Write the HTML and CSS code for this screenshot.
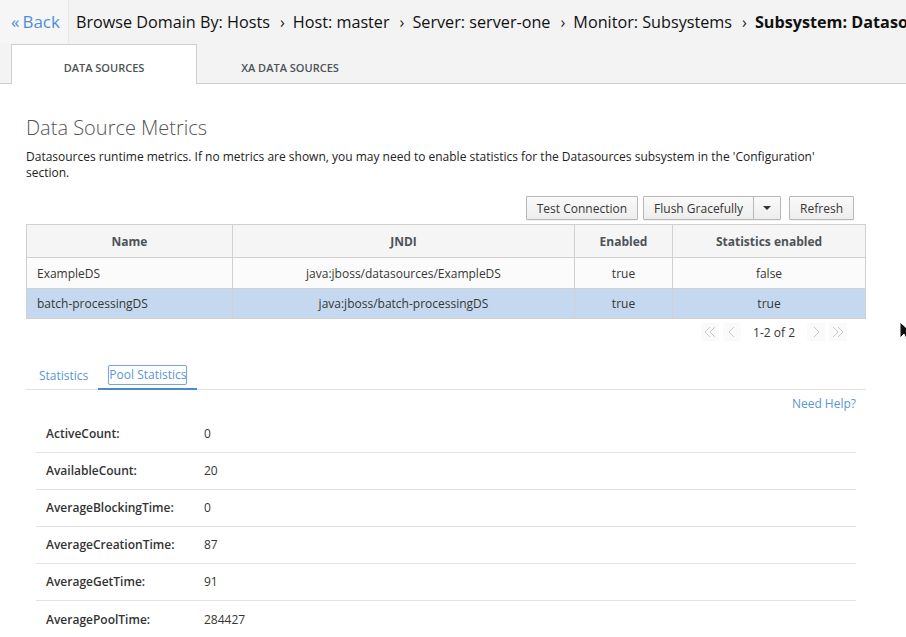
FILE: index.html
```html
<!DOCTYPE html>
<html>
<head>
<meta charset="utf-8">
<link rel="stylesheet" href="styles.css">
</head>
<body>
<div class="header">
  <div class="crumbs">
    <a class="back"><span class="laquo">«</span> Back</a>
    <div class="path"><span>Browse Domain By: Hosts</span><span class="sep">›</span><span>Host: master</span><span class="sep">›</span><span>Server: server-one</span><span class="sep">›</span><span>Monitor: Subsystems</span><span class="sep">›</span><b>Subsystem: Datasources</b></div>
  </div>
  <div class="tabs">
    <div class="tab active">DATA SOURCES</div>
    <div class="tab">XA DATA SOURCES</div>
  </div>
</div>

<div class="content">
  <h2 class="title">Data Source Metrics</h2>
  <p class="desc">Datasources runtime metrics. If no metrics are shown, you may need to enable statistics for the Datasources subsystem in the 'Configuration' section.</p>

  <div class="toolbar">
    <button class="btn">Test Connection</button>
    <div class="split">
      <button class="btn btn-main">Flush Gracefully</button>
      <button class="btn btn-caret"><span class="caret"></span></button>
    </div>
    <button class="btn">Refresh</button>
  </div>

  <table class="grid">
    <thead>
      <tr><th class="c-name">Name</th><th class="c-jndi">JNDI</th><th class="c-en">Enabled</th><th class="c-st">Statistics enabled</th></tr>
    </thead>
    <tbody>
      <tr><td class="left">ExampleDS</td><td>java:jboss/datasources/ExampleDS</td><td>true</td><td>false</td></tr>
      <tr class="selected"><td class="left">batch-processingDS</td><td>java:jboss/batch-processingDS</td><td>true</td><td>true</td></tr>
    </tbody>
  </table>

  <div class="pager">
    <span class="pg"><svg width="16" height="14" viewBox="0 0 16 14"><path d="M8 2 L3 7 L8 12 M13 2 L8 7 L13 12" fill="none" stroke="#c8c8c8" stroke-width="1"/></svg></span>
    <span class="pg"><svg width="16" height="14" viewBox="0 0 16 14"><path d="M10 2 L5 7 L10 12" fill="none" stroke="#c8c8c8" stroke-width="1"/></svg></span>
    <span class="pg-text">1-2 of 2</span>
    <span class="pg"><svg width="16" height="14" viewBox="0 0 16 14"><path d="M6 2 L11 7 L6 12" fill="none" stroke="#c8c8c8" stroke-width="1"/></svg></span>
    <span class="pg"><svg width="16" height="14" viewBox="0 0 16 14"><path d="M3 2 L8 7 L3 12 M8 2 L13 7 L8 12" fill="none" stroke="#c8c8c8" stroke-width="1"/></svg></span>
  </div>

  <div class="subtabs">
    <div class="subtab">Statistics</div>
    <div class="subtab active"><span class="focus">Pool Statistics</span></div>
  </div>

  <div class="help-row"><a class="help">Need Help?</a></div>

  <div class="metrics">
    <div class="mrow"><span class="mlabel">ActiveCount:</span><span class="mval">0</span></div>
    <div class="mrow"><span class="mlabel">AvailableCount:</span><span class="mval">20</span></div>
    <div class="mrow"><span class="mlabel">AverageBlockingTime:</span><span class="mval">0</span></div>
    <div class="mrow"><span class="mlabel">AverageCreationTime:</span><span class="mval">87</span></div>
    <div class="mrow"><span class="mlabel">AverageGetTime:</span><span class="mval">91</span></div>
    <div class="mrow"><span class="mlabel">AveragePoolTime:</span><span class="mval">284427</span></div>
  </div>
</div>

<svg class="cursor" width="12" height="22" viewBox="0 0 12 22"><path d="M1 1 L1 17 L5 13 L8 20 L11 19 L8 12 L13 12 Z" fill="#111" stroke="#fff" stroke-width="1"/></svg>
</body>
</html>
```

FILE: styles.css
```css
* { box-sizing: border-box; }
html, body {
  margin: 0;
  padding: 0;
  background: #fff;
  font-family: "Open Sans", "Liberation Sans", sans-serif;
  color: #363636;
  overflow: hidden;
  width: 906px;
  height: 637px;
}

.header {
  background: #f3f3f3;
  border-bottom: 1px solid #cfcfcf;
  height: 84px;
}
.crumbs {
  display: flex;
  align-items: center;
  height: 43px;
  white-space: nowrap;
  overflow: hidden;
}
.back {
  display: flex;
  align-items: center;
  height: 43px;
  padding: 0 8px 0 11px;
  background: #f6f6f6;
  color: #4d8fd6;
  font-size: 17px;
  border-right: 1px solid #e6e6e6;
  margin-right: 7px;
  flex-shrink: 0;
}
.laquo { margin-right: 3px; }
.path {
  font-size: 16.2px;
  color: #111;
  white-space: nowrap;
}
.path .sep {
  display: inline-block;
  margin: 0 8px 0 10px;
  color: #222;
}
.path b { font-weight: 700; }

.tabs {
  display: flex;
  padding-left: 11px;
  height: 40px;
  margin-top: 1px;
}
.tab {
  width: 186px;
  height: 40px;
  display: flex;
  align-items: center;
  justify-content: center;
  font-size: 11px;
  font-weight: 600;
  color: #4d5258;
  padding-top: 6px;
}
.tab.active {
  background: #fff;
  border: 1px solid #cfcfcf;
  border-bottom: none;
  height: 40px;
}

.content {
  padding: 0 40px 0 26px;
}
.title {
  margin: 32px 0 0;
  font-size: 20px;
  line-height: 24px;
  font-weight: 300;
  color: #555;
}
.desc {
  margin: 9px 0 0;
  font-size: 12px;
  line-height: 16px;
  color: #222;
  padding-right: 50px;
}

.toolbar {
  display: flex;
  justify-content: flex-end;
  margin-top: 15px;
  padding-right: 12px;
  gap: 5px;
}
.btn {
  font-family: "Open Sans", "Liberation Sans", sans-serif;
  font-size: 12px;
  color: #363636;
  height: 24px;
  padding: 0 10px;
  border: 1px solid #b7b7b7;
  background: linear-gradient(#fafafa, #ededed);
  border-radius: 1px;
  box-shadow: 0 1px 1px rgba(0,0,0,0.06);
}
.split { display: flex; margin-right: 3px; }
.btn-main { border-right: 1px solid #b7b7b7; }
.btn-caret {
  width: 28px;
  padding: 0;
  border-left: 1px solid #b7b7b7;
  margin-left: -1px;
  display: flex;
  align-items: center;
  justify-content: center;
}
.caret {
  width: 0; height: 0;
  border-left: 4px solid transparent;
  border-right: 4px solid transparent;
  border-top: 4px solid #363636;
}

.grid {
  margin-top: 4px;
  width: 840px;
  border-collapse: collapse;
  font-size: 12px;
}
.grid th, .grid td {
  border: 1px solid #d1d1d1;
  text-align: center;
  padding: 0 10px;
}
.grid th {
  height: 33px;
  background: #f5f5f5;
  font-weight: 700;
  color: #4d5258;
}
.grid td {
  height: 31px;
  background: #fbfbfb;
}
.grid td.left { text-align: left; }
.grid tr.selected td {
  background: #c4d9ef;
  height: 30px;
}
.c-name { width: 206px; }
.c-jndi { width: 342px; }
.c-en { width: 98px; }

.pager {
  display: flex;
  justify-content: flex-end;
  align-items: center;
  gap: 4px;
  height: 24px;
  margin-top: 1px;
  padding-right: 19px;
  font-size: 12px;
}
.pg {
  width: 18px; height: 18px;
  display: flex; align-items: center; justify-content: center;
  background: #fafafa;
}
.pg-text { margin: 0 8px 0 8px; color: #363636; }

.subtabs {
  display: flex;
  margin-top: 19px;
  border-bottom: 1px solid #e2e2e2;
  width: 840px;
  height: 27px;
}
.subtab {
  font-size: 12px;
  color: #5a96d8;
  padding: 0 10px 0 13px;
  height: 26px;
  line-height: 26px;
}
.subtab.active {
  border-bottom: 2px solid #4a8ad0;
  padding: 0 10px;
  height: 27px;
  line-height: 24px;
}
.focus {
  border: 1px solid #7aa5e0;
  border-radius: 2px;
  padding: 0 0 1px 0;
  box-shadow: 0 0 1px #9bbbe6;
  line-height: 16px;
}

.help-row {
  width: 830px;
  display: flex;
  justify-content: flex-end;
  height: 26px;
  align-items: center;
}
.help { font-size: 12px; color: #5a96d8; }

.metrics {
  width: 820px;
  margin-left: 10px;
}
.mrow {
  display: flex;
  align-items: center;
  height: 37px;
  border-bottom: 1px solid #e2e2e2;
  font-size: 12px;
  padding-left: 10px;
  padding-bottom: 1px;
}
.mrow:last-child { border-bottom: none; }
.mlabel {
  width: 158px;
  font-weight: 600;
  color: #333;
}
.mval { color: #363636; }

.cursor {
  position: absolute;
  left: 899px;
  top: 321px;
}
```
